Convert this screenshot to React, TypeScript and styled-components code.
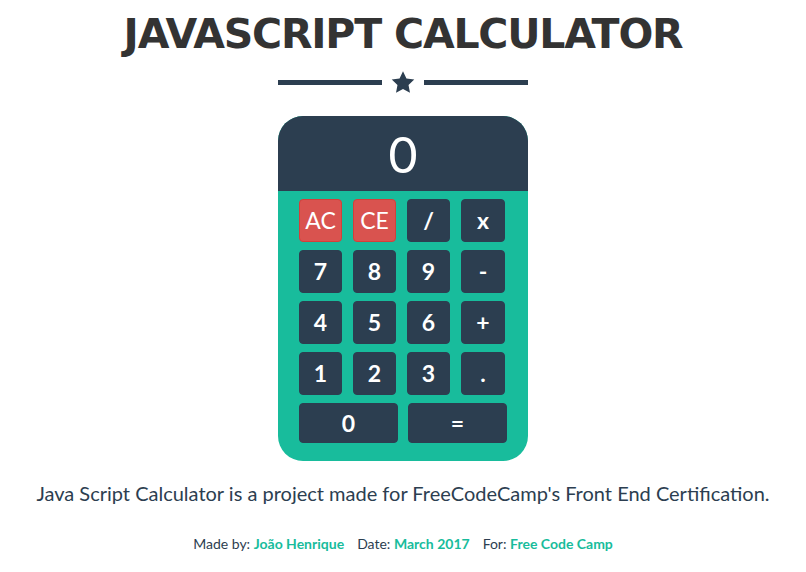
import React from "react";
import styled, { createGlobalStyle } from "styled-components";

const Global = createGlobalStyle`
  html, body { margin: 0; padding: 0; background: #fff; }
  body { font-family: Lato, "Open Sans", sans-serif; color: #2c3e50; }
`;

const Page = styled.div`
  display: flex;
  flex-direction: column;
  align-items: center;
  padding-top: 10px;
`;

const Title = styled.h1`
  margin: 0;
  font-family: "DejaVu Sans", sans-serif;
  font-weight: 700;
  font-size: 41px;
  line-height: 48px;
  letter-spacing: -1.2px;
  color: #333;
  text-transform: uppercase;
`;

const Divider = styled.div`
  display: flex;
  align-items: center;
  width: 250px;
  margin-top: 12px;
  gap: 8px;
`;

const Line = styled.div`
  flex: 1;
  height: 5px;
  background: #2c3e50;
`;

const StarIcon = styled.svg`
  width: 26px;
  height: 25px;
  display: block;
`;

const Calc = styled.div`
  margin-top: 21px;
  width: 250px;
  background: #18bc9c;
  border-radius: 25px;
  overflow: hidden;
  padding-bottom: 18px;
`;

const Display = styled.div`
  height: 75px;
  background: #2c3e50;
  color: #fff;
  font-family: Lato, sans-serif;
  font-weight: 400;
  font-size: 50px;
  line-height: 77px;
  text-align: center;
`;

const Keys = styled.div`
  display: grid;
  grid-template-columns: 43px 43px 43px 44px;
  grid-auto-rows: 43px;
  column-gap: 11px;
  row-gap: 8px;
  padding: 8px 0 0 21px;
`;

const BottomRow = styled.div`
  display: flex;
  gap: 10px;
  padding: 8px 0 0 21px;
`;

const Key = styled.button<{ $danger?: boolean; $wide?: boolean }>`
  box-sizing: border-box;
  width: ${(p) => (p.$wide ? "99px" : "100%")};
  height: ${(p) => (p.$wide ? "40px" : "100%")};
  margin: 0;
  padding: 0;
  border-radius: 4px;
  border: 1px solid ${(p) => (p.$danger ? "#d43f3a" : "#2c3e50")};
  background: ${(p) => (p.$danger ? "#d9534f" : "#2c3e50")};
  color: #fff;
  font-family: Lato, sans-serif;
  font-weight: ${(p) => (p.$danger ? 400 : 700)};
  font-size: 23px;
  line-height: 1;
  display: flex;
  align-items: center;
  justify-content: center;
  cursor: pointer;
`;

const Description = styled.p`
  margin: 18px 0 0;
  font-family: Lato, sans-serif;
  font-size: 20px;
  line-height: 28px;
  color: #2c3e50;
  text-align: center;
`;

const Footer = styled.p`
  margin: 28px 0 0;
  font-family: Lato, sans-serif;
  font-size: 14px;
  color: #2c3e50;
  display: flex;
  gap: 13px;
`;

const Credit = styled.span``;

const Accent = styled.span`
  color: #18bc9c;
  font-weight: 700;
`;

const keys: { label: string; danger?: boolean }[] = [
  { label: "AC", danger: true },
  { label: "CE", danger: true },
  { label: "/" },
  { label: "x" },
  { label: "7" },
  { label: "8" },
  { label: "9" },
  { label: "-" },
  { label: "4" },
  { label: "5" },
  { label: "6" },
  { label: "+" },
  { label: "1" },
  { label: "2" },
  { label: "3" },
  { label: "." },
];

export default function App() {
  return (
    <>
      <Global />
      <Page>
        <Title>JavaScript Calculator</Title>
        <Divider>
          <Line />
          <StarIcon viewBox="0 0 24 24">
            <path
              fill="#2c3e50"
              d="M12 1.2l3.3 6.9 7.5 1-5.5 5.2 1.4 7.5L12 18.2l-6.7 3.6 1.4-7.5L1.2 9.1l7.5-1z"
            />
          </StarIcon>
          <Line />
        </Divider>
        <Calc>
          <Display>0</Display>
          <Keys>
            {keys.map((k) => (
              <Key key={k.label} $danger={k.danger}>
                {k.label}
              </Key>
            ))}
          </Keys>
          <BottomRow>
            <Key $wide>0</Key>
            <Key $wide>=</Key>
          </BottomRow>
        </Calc>
        <Description>
          Java Script Calculator is a project made for FreeCodeCamp's Front End Certification.
        </Description>
        <Footer>
          <Credit>
            Made by: <Accent>João Henrique</Accent>
          </Credit>
          <Credit>
            Date: <Accent>March 2017</Accent>
          </Credit>
          <Credit>
            For: <Accent>Free Code Camp</Accent>
          </Credit>
        </Footer>
      </Page>
    </>
  );
}
